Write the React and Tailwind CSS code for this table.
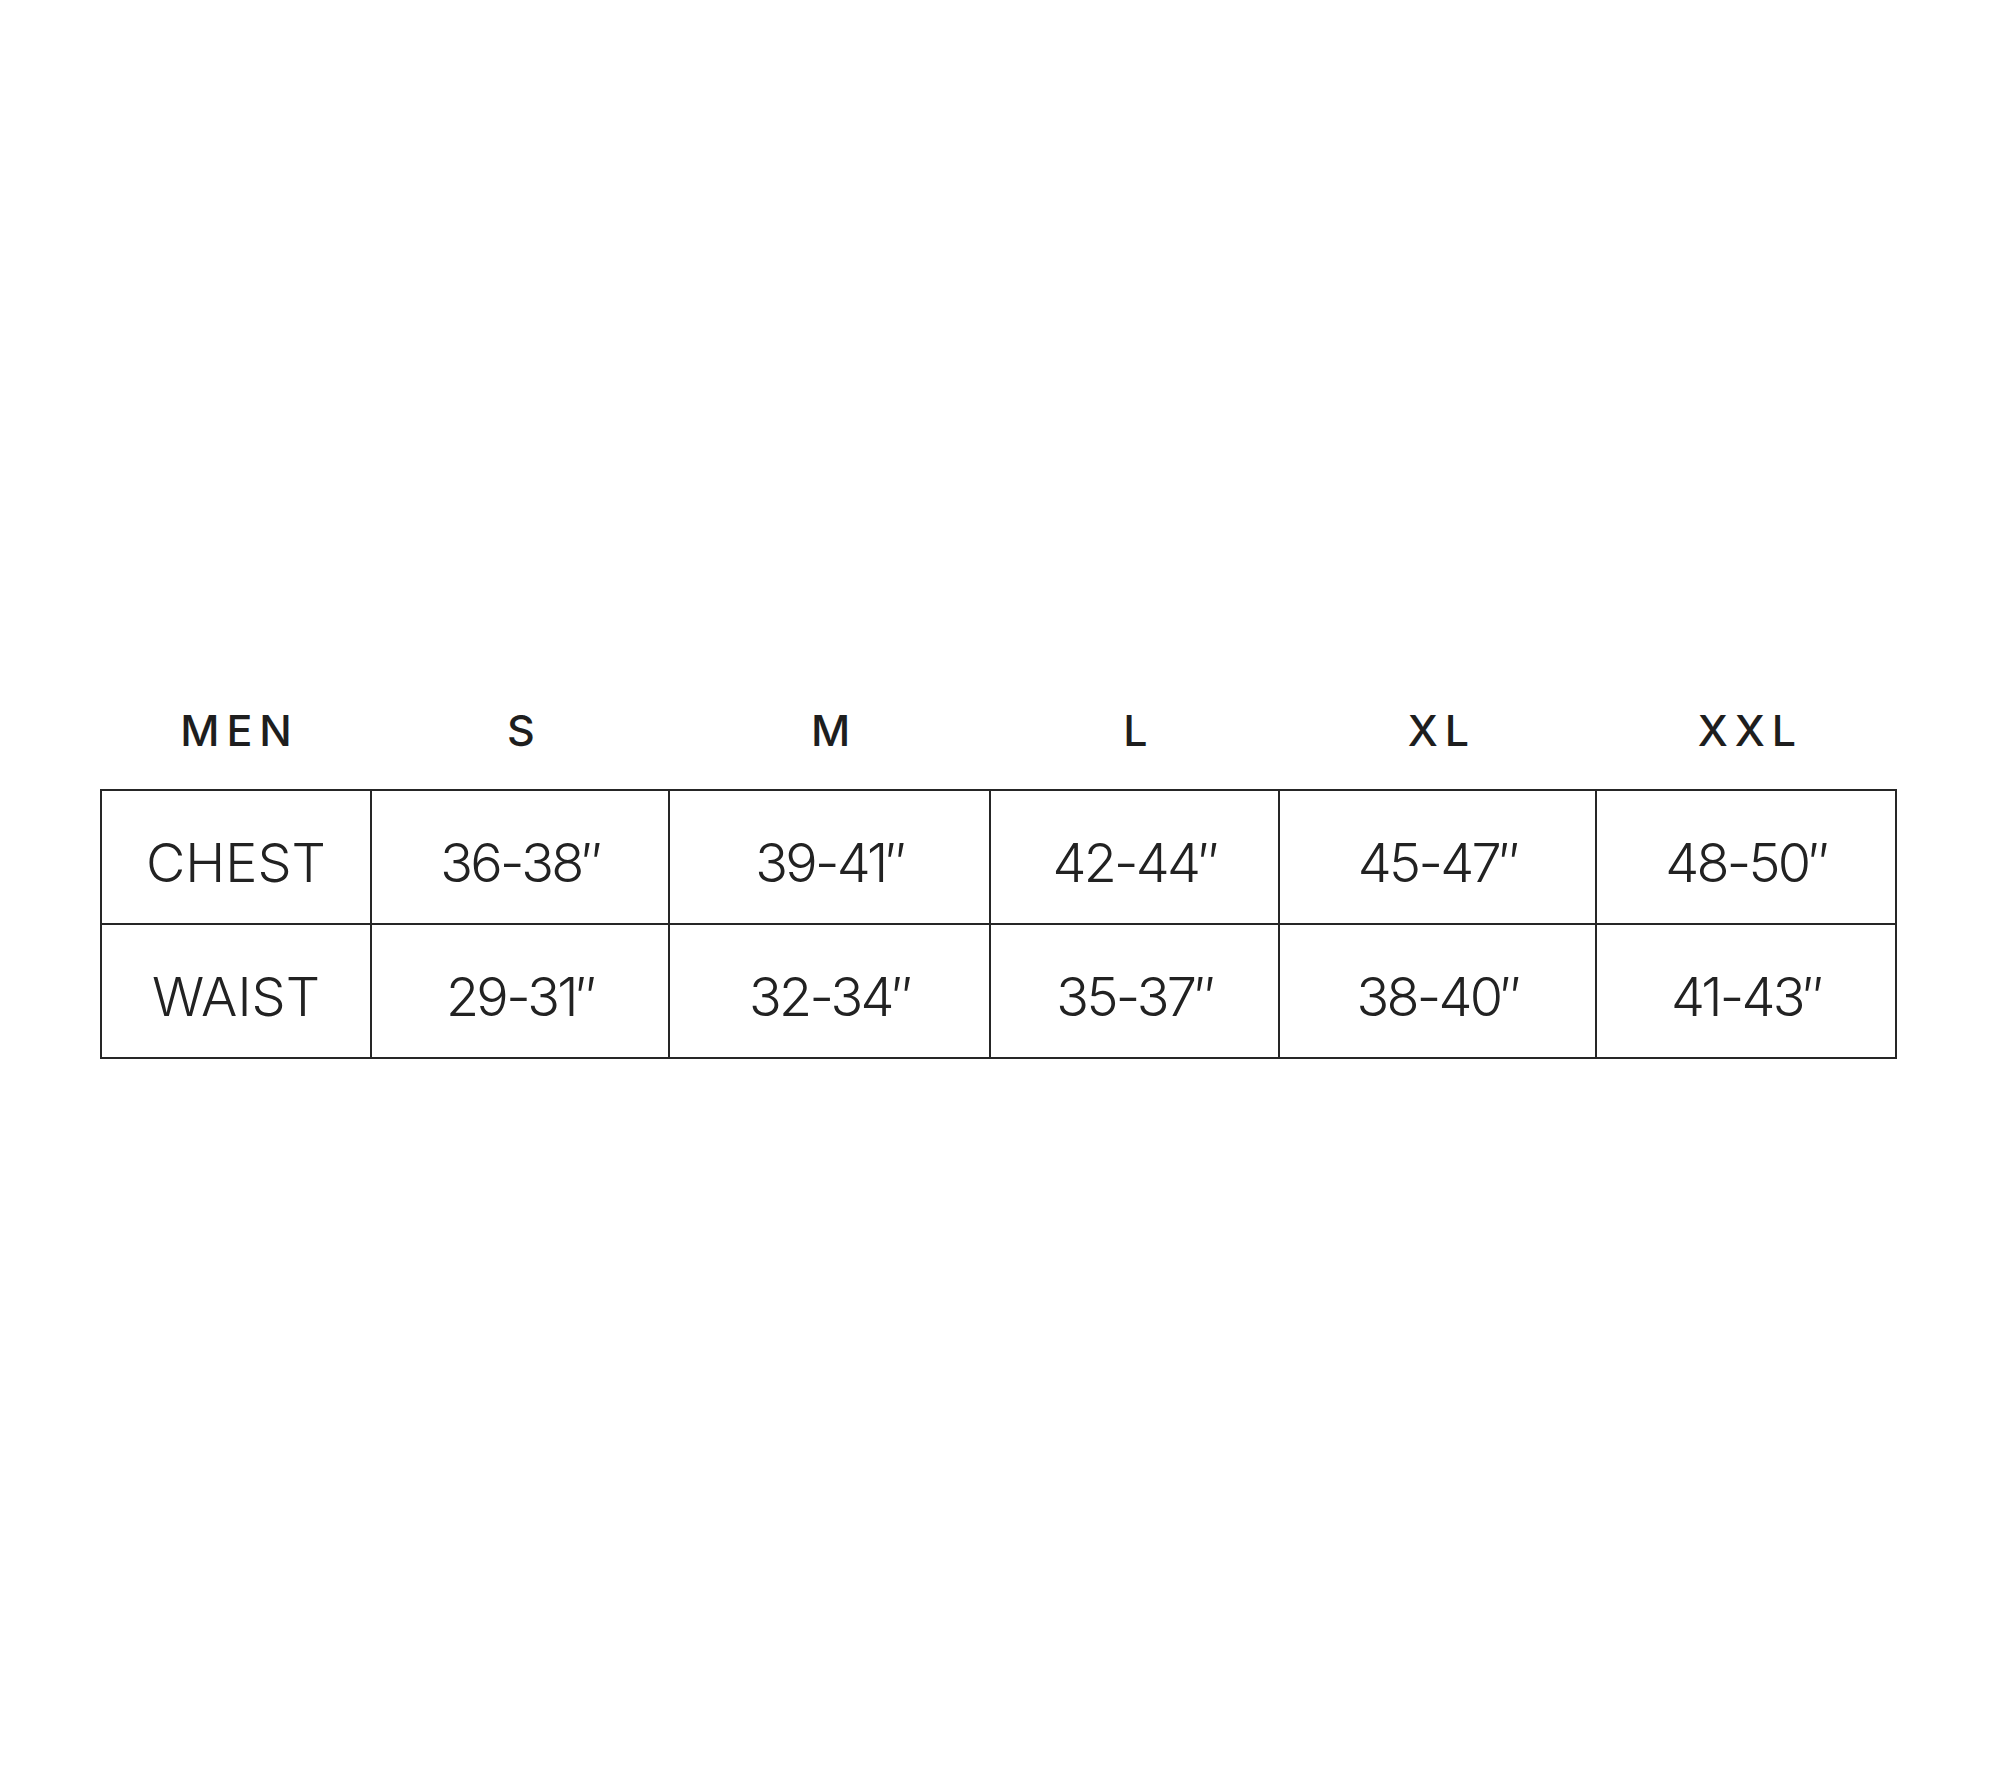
import React from "react";

const sizes = ["S", "M", "L", "XL", "XXL"];

const rows = [
  { label: "CHEST", values: ["36-38″", "39-41″", "42-44″", "45-47″", "48-50″"] },
  { label: "WAIST", values: ["29-31″", "32-34″", "35-37″", "38-40″", "41-43″"] },
];

const SizeChart = () => {
  return (
    <div className="w-[2000px] h-[1778px] bg-white pt-[700px] pl-[100px] text-[#222]">
      {/* header row */}
      <div
        className="grid grid-cols-[272px_298px_321px_289px_317px_300px] h-[60px] items-center text-[43px] leading-none font-medium tracking-[0.16em] text-[#1e1e1e]"
        style={{ fontFamily: "Inter, 'Liberation Sans', sans-serif" }}
      >
        <div className="text-center pl-[0.16em]">MEN</div>
        {sizes.map((size) => (
          <div key={size} className="text-center pl-[0.16em]">
            {size}
          </div>
        ))}
      </div>

      {/* table */}
      <div
        className="mt-[29px] w-[1797px] border-t-2 border-l-2 border-[#262626] text-[54px] leading-none font-light"
        style={{ fontFamily: "Inter, 'Liberation Sans', sans-serif" }}
      >
        {rows.map((row) => (
          <div
            key={row.label}
            className="grid grid-cols-[270px_298px_321px_289px_317px_300px] h-[134px]"
          >
            <div className="flex items-center justify-center pt-3 border-r-2 border-b-2 border-[#262626]">
              {row.label}
            </div>
            {row.values.map((value, index) => (
              <div
                key={index}
                className="flex items-center justify-center pt-3 tracking-[-0.05em] border-r-2 border-b-2 border-[#262626]"
              >
                {value}
              </div>
            ))}
          </div>
        ))}
      </div>
    </div>
  );
};

export default function App() {
  return <SizeChart />;
}
